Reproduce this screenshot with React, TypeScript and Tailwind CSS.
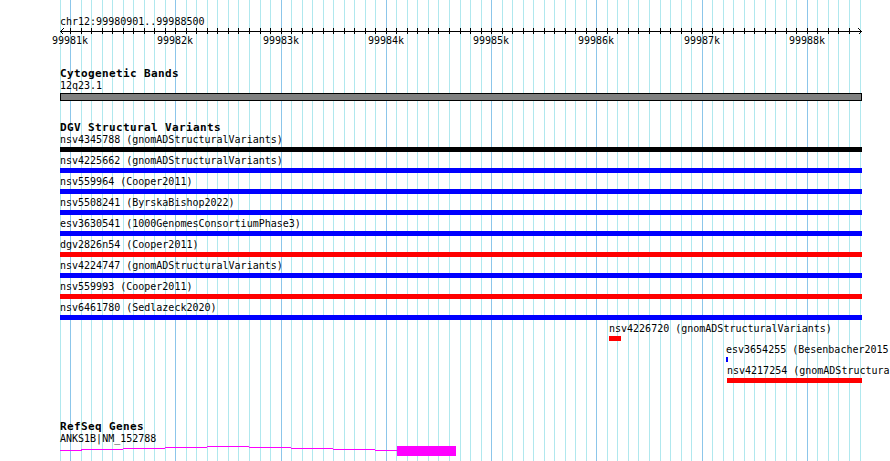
const START = 99980900;
const PX = 800 / 7600;
const toX = (bp: number) => 60 + (bp - START) * PX;

const mono = "font-['DejaVu_Sans_Mono',monospace] text-black";
const small = `${mono} text-[10px] leading-[12px] whitespace-nowrap`;
const title = `${mono} text-[11px] leading-[13px] font-bold tracking-[0.38px] whitespace-nowrap`;

type Row = { label: string; x: number; w: number; color: string };

const rows: Row[] = [
  { label: "nsv4345788 (gnomADStructuralVariants)", x: 60, w: 802, color: "bg-black" },
  { label: "nsv4225662 (gnomADStructuralVariants)", x: 60, w: 802, color: "bg-[#0000ff]" },
  { label: "nsv559964 (Cooper2011)", x: 60, w: 802, color: "bg-[#0000ff]" },
  { label: "nsv5508241 (ByrskaBishop2022)", x: 60, w: 802, color: "bg-[#0000ff]" },
  { label: "esv3630541 (1000GenomesConsortiumPhase3)", x: 60, w: 802, color: "bg-[#0000ff]" },
  { label: "dgv2826n54 (Cooper2011)", x: 60, w: 802, color: "bg-[#ff0000]" },
  { label: "nsv4224747 (gnomADStructuralVariants)", x: 60, w: 802, color: "bg-[#0000ff]" },
  { label: "nsv559993 (Cooper2011)", x: 60, w: 802, color: "bg-[#ff0000]" },
  { label: "nsv6461780 (Sedlazeck2020)", x: 60, w: 802, color: "bg-[#0000ff]" },
  { label: "nsv4226720 (gnomADStructuralVariants)", x: 609, w: 12, color: "bg-[#ff0000]" },
  { label: "esv3654255 (Besenbacher2015)", x: 726, w: 2, color: "bg-[#0000ff]" },
  { label: "nsv4217254 (gnomADStructuralVariants)", x: 727, w: 135, color: "bg-[#ff0000]" },
];

const ticks: { x: number; bp: number }[] = [];
for (let bp = 99981000; bp <= 99988500; bp += 100) {
  ticks.push({ x: Math.floor(toX(bp)), bp });
}

function Grid() {
  return (
    <svg className="absolute left-0 top-0" width={890} height={461} shapeRendering="crispEdges">
      <line x1={60.5} y1={0} x2={60.5} y2={461} stroke="#b0e8ee" />
      {ticks.map((t) => (
        <line
          key={t.bp}
          x1={t.x + 0.5}
          y1={0}
          x2={t.x + 0.5}
          y2={461}
          stroke={t.bp % 1000 === 0 ? "#8cc6ea" : "#b0e8ee"}
        />
      ))}
    </svg>
  );
}

function Ruler() {
  return (
    <div className="relative h-[20px]">
      <svg className="absolute left-0 top-0" width={890} height={8} shapeRendering="crispEdges">
        <line x1={60} y1={3.5} x2={862} y2={3.5} stroke="#000" />
        {ticks
          .filter((t) => t.bp < 99988500)
          .map((t) => (
            <line key={t.bp} x1={t.x + 0.5} y1={0} x2={t.x + 0.5} y2={6} stroke="#000" />
          ))}
        <polyline points="63.5,0.5 60.5,3.5 63.5,6.5" fill="none" stroke="#000" />
        <polyline points="858.5,0.5 861.5,3.5 858.5,6.5" fill="none" stroke="#000" />
      </svg>
      {ticks
        .filter((t) => t.bp % 1000 === 0)
        .map((t) => (
          <span
            key={t.bp}
            className={`${small} absolute top-[7px] w-[40px] text-center`}
            style={{ left: t.x - 20 }}
          >
            {t.bp / 1000}k
          </span>
        ))}
    </div>
  );
}

function Gene() {
  const segs: [number, number, number][] = [
    [60, 81, 5],
    [81, 123, 4],
    [123, 165, 3],
    [165, 207, 2],
    [207, 249, 1],
    [249, 291, 2],
    [291, 333, 3],
    [333, 375, 4],
    [375, 397, 5],
  ];
  return (
    <svg className="block" width={890} height={16} shapeRendering="crispEdges">
      {segs.map(([a, b, y]) => (
        <line key={a} x1={a} y1={y + 0.5} x2={b} y2={y + 0.5} stroke="#ff00ff" />
      ))}
      <line x1={81.5} y1={4} x2={81.5} y2={6} stroke="#ff00ff" />
      <rect x={397} y={1} width={59} height={10} fill="#ff00ff" />
    </svg>
  );
}

export default function App() {
  return (
    <div className="relative isolate w-[890px] h-[461px] overflow-hidden bg-white">
      <Grid />
      <div className="relative">
        <div className={`${small} pt-[16px] pl-[60px]`}>chr12:99980901..99988500</div>
        <Ruler />

        <div className={`${title} mt-[19px] pl-[60px]`}>Cytogenetic Bands</div>
        <div className={`${small} pl-[60px]`}>12q23.1</div>
        <div className="mt-[1px] ml-[60px] w-[802px] h-[8px] border border-black bg-[#808080]" />

        <div className={`${title} mt-[20px] pl-[60px]`}>DGV Structural Variants</div>
        <div className="flex flex-col">
          {rows.map((r) => (
            <div key={r.label} className="h-[21px]" style={{ paddingLeft: r.x }}>
              <div className={small}>{r.label}</div>
              <div className={`mt-[1px] h-[5px] ${r.color}`} style={{ width: r.w }} />
            </div>
          ))}
        </div>

        <div className={`${title} mt-[34px] pl-[60px]`}>RefSeq Genes</div>
        <div className={`${small} pl-[60px]`}>ANKS1B|NM_152788</div>
        <Gene />
      </div>
    </div>
  );
}
